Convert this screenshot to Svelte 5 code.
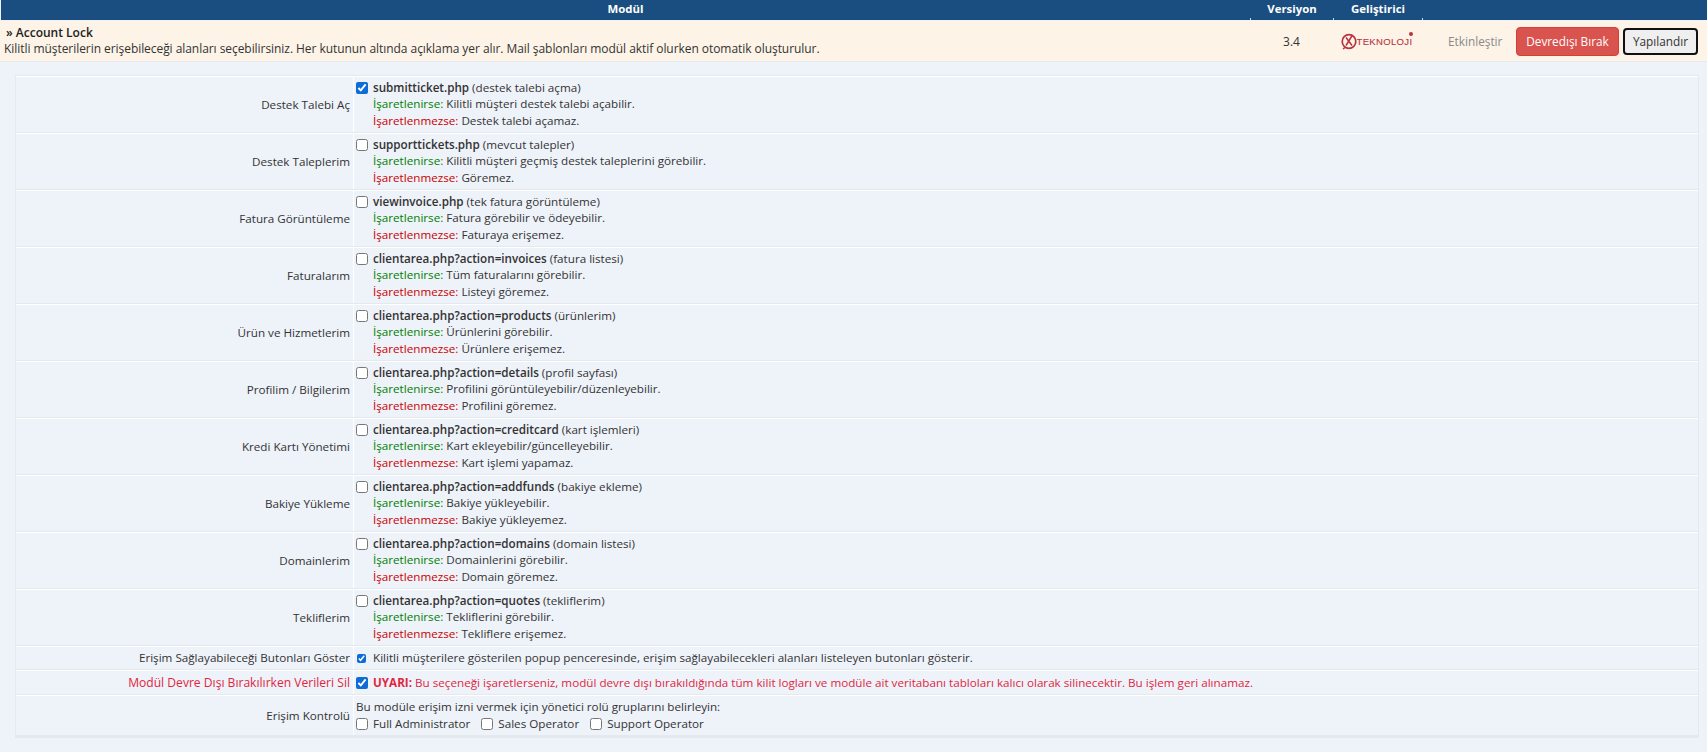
<script>
  const rows = [
    { label: 'Destek Talebi Aç', file: 'submitticket.php', note: 'destek talebi açma', yes: 'Kilitli müşteri destek talebi açabilir.', no: 'Destek talebi açamaz.', on: true },
    { label: 'Destek Taleplerim', file: 'supporttickets.php', note: 'mevcut talepler', yes: 'Kilitli müşteri geçmiş destek taleplerini görebilir.', no: 'Göremez.' },
    { label: 'Fatura Görüntüleme', file: 'viewinvoice.php', note: 'tek fatura görüntüleme', yes: 'Fatura görebilir ve ödeyebilir.', no: 'Faturaya erişemez.' },
    { label: 'Faturalarım', file: 'clientarea.php?action=invoices', note: 'fatura listesi', yes: 'Tüm faturalarını görebilir.', no: 'Listeyi göremez.' },
    { label: 'Ürün ve Hizmetlerim', file: 'clientarea.php?action=products', note: 'ürünlerim', yes: 'Ürünlerini görebilir.', no: 'Ürünlere erişemez.' },
    { label: 'Profilim / Bilgilerim', file: 'clientarea.php?action=details', note: 'profil sayfası', yes: 'Profilini görüntüleyebilir/düzenleyebilir.', no: 'Profilini göremez.' },
    { label: 'Kredi Kartı Yönetimi', file: 'clientarea.php?action=creditcard', note: 'kart işlemleri', yes: 'Kart ekleyebilir/güncelleyebilir.', no: 'Kart işlemi yapamaz.' },
    { label: 'Bakiye Yükleme', file: 'clientarea.php?action=addfunds', note: 'bakiye ekleme', yes: 'Bakiye yükleyebilir.', no: 'Bakiye yükleyemez.' },
    { label: 'Domainlerim', file: 'clientarea.php?action=domains', note: 'domain listesi', yes: 'Domainlerini görebilir.', no: 'Domain göremez.' },
    { label: 'Tekliflerim', file: 'clientarea.php?action=quotes', note: 'tekliflerim', yes: 'Tekliflerini görebilir.', no: 'Tekliflere erişemez.' }
  ];
</script>

<div class="page">
  <div class="head">
    <div class="hc">Modül</div>
    <div class="hc tick">Versiyon</div>
    <div class="hc tick">Geliştirici</div>
    <div class="hc tick"></div>
  </div>

  <div class="module">
    <div class="info">
      <div class="title"><span class="raquo">»</span> Account Lock</div>
      <div class="desc">Kilitli müşterilerin erişebileceği alanları seçebilirsiniz. Her kutunun altında açıklama yer alır. Mail şablonları modül aktif olurken otomatik oluşturulur.</div>
    </div>
    <div class="ver">3.4</div>
    <div class="dev">
      <svg width="18" height="18" viewBox="0 0 18 18" aria-hidden="true">
        <circle cx="9" cy="9.5" r="6.8" fill="none" stroke="#b9323f" stroke-width="1.7" />
        <path d="M6 5.5 L12 13.5 M12.5 3 L6 13.5 M5 15.5 L3 17" fill="none" stroke="#b9323f" stroke-width="1.5" />
      </svg>
      <span class="brand">TEKNOLOJI</span>
      <i class="dot"></i>
    </div>
    <div class="actions">
      <span class="enable">Etkinleştir</span>
      <button class="btn danger">Devredışı Bırak</button>
      <button class="btn conf">Yapılandır</button>
    </div>
  </div>

  <div class="panel">
    <table>
      <tbody>
        {#each rows as r}
          <tr class="tall">
            <td class="lab">{r.label}</td>
            <td class="field">
              <div class="line first"><input type="checkbox" checked={r.on} /><b>{r.file}</b> ({r.note})</div>
              <div class="sub"><span class="green">İşaretlenirse:</span> {r.yes}</div>
              <div class="sub"><span class="red">İşaretlenmezse:</span> {r.no}</div>
            </td>
          </tr>
        {/each}
        <tr class="short">
          <td class="lab">Erişim Sağlayabileceği Butonları Göster</td>
          <td class="field"><div class="line"><input class="tiny" type="checkbox" checked />Kilitli müşterilere gösterilen popup penceresinde, erişim sağlayabilecekleri alanları listeleyen butonları gösterir.</div></td>
        </tr>
        <tr class="short warn">
          <td class="lab">Modül Devre Dışı Bırakılırken Verileri Sil</td>
          <td class="field"><div class="line"><input type="checkbox" checked /><b>UYARI:</b> Bu seçeneği işaretlerseniz, modül devre dışı bırakıldığında tüm kilit logları ve modüle ait veritabanı tabloları kalıcı olarak silinecektir. Bu işlem geri alınamaz.</div></td>
        </tr>
        <tr class="acl">
          <td class="lab">Erişim Kontrolü</td>
          <td class="field">
            <div class="intro">Bu modüle erişim izni vermek için yönetici rolü gruplarını belirleyin:</div>
            <div class="roles">
              <label><input type="checkbox" />Full Administrator</label>
              <label><input type="checkbox" />Sales Operator</label>
              <label><input type="checkbox" />Support Operator</label>
            </div>
          </td>
        </tr>
      </tbody>
    </table>
  </div>
</div>

<style>
  :global(body) {
    margin: 0;
    background: #eef2f9;
  }
  .page {
    font-family: "Open Sans", sans-serif;
    font-size: 12px;
    line-height: 17px;
    color: #333;
    height: 752px;
    overflow: hidden;
    background: #eef2f9;
  }
  .head {
    display: grid;
    grid-template-columns: 1250px 83px 89px 1fr;
    height: 20px;
    margin-left: 1px;
    background: #1a4e80;
    color: #fff;
    font-size: 11.4px;
    font-weight: 700;
    text-align: center;
    line-height: 17px;
  }
  .hc {
    position: relative;
    margin-left: -1px;
  }
  .hc.tick::before {
    content: "";
    position: absolute;
    left: 0;
    bottom: 0;
    width: 1px;
    height: 2px;
    background: #cfd8e3;
  }
  .module {
    display: grid;
    grid-template-columns: 1250px 83px 89px 1fr;
    align-items: center;
    height: 40px;
    margin-top: 1px;
    background: #fdf3e7;
    box-shadow: 0 1px 0 #e8e9ec;
  }
  .info {
    padding-left: 4px;
    color: #333;
  }
  .title {
    font-weight: 600;
    color: #222;
    padding-left: 2px;
    line-height: 16px;
  }
  .desc {
    line-height: 16px;
    letter-spacing: -0.056px;
  }
  .ver {
    text-align: center;
  }
  .dev {
    position: relative;
    display: flex;
    align-items: center;
    justify-content: center;
    color: #b9323f;
    margin-left: -3px;
  }
  .brand {
    font-family: "Liberation Sans", sans-serif;
    font-size: 9.5px;
    letter-spacing: 0.35px;
    -webkit-text-stroke: 0.1px #b9323f;
    margin-left: -1px;
    padding-top: 1px;
  }
  .dot {
    position: absolute;
    left: 79px;
    top: 0;
    width: 4px;
    height: 4px;
    border-radius: 50%;
    background: #b9323f;
  }
  .actions {
    display: flex;
    align-items: center;
    padding-left: 26px;
  }
  .enable {
    color: #8a8a8a;
    width: 68px;
    font-size: 11.8px;
  }
  .btn {
    font: inherit;
    box-sizing: border-box;
    cursor: pointer;
  }
  .danger {
    width: 103px;
    height: 29px;
    background: #d9534f;
    color: #fff;
    border: 1px solid #d43f3a;
    border-radius: 4px;
    font-size: 11.8px;
  }
  .conf {
    width: 75px;
    height: 27px;
    margin-left: 4px;
    background: #efefef;
    color: #333;
    border: 2px solid #111;
    border-radius: 4px;
    font-size: 11.8px;
  }
  .panel {
    margin: 14px 8px 0 15px;
    background: #e5e8ec;
    padding: 0 1px 2px 1px;
    border-top: 1px solid #e5e8ec;
    font-size: 11.66px;
  }
  table {
    width: 100%;
    border-collapse: collapse;
    table-layout: fixed;
  }
  td {
    background: #eef2f9;
    padding: 0;
    border-bottom: 1px solid #e5e8ec;
    box-shadow: inset 0 1px 0 #fff;
  }
  .lab {
    width: 334px;
    text-align: right;
    padding-right: 3px;
    box-sizing: content-box;
    vertical-align: middle;
    border-right: 1px solid #fff;
  }
  .tall td { height: 56px; }
  .short td { height: 23px; }
  .warn td { height: 24px; }
  .acl td { height: 40px; }
  .field {
    padding-left: 2px;
  }
  .line {
    height: 17px;
    white-space: nowrap;
  }
  .line.first {
    height: 16px;
  }
  .line b {
    font-weight: 600;
    color: #333;
  }
  input[type="checkbox"] {
    width: 12px;
    height: 12px;
    margin: 0 5px 0 0;
    accent-color: #0d6cd6;
    vertical-align: -2px;
  }
  input.tiny {
    width: 9px;
    height: 9px;
    margin: 0 7px 0 1px;
    vertical-align: -1px;
  }
  .sub {
    padding-left: 17px;
  }
  .green { color: #008000; }
  .red { color: #cc0000; }
  .warn .lab {
    font-size: 12.1px;
  }
  .warn .lab, .warn .line, .warn .line b {
    color: #e0263f;
  }
  .warn .line b { font-weight: 700; }
  .roles {
    display: flex;
    gap: 11px;
  }
  .roles label {
    display: block;
  }
</style>
